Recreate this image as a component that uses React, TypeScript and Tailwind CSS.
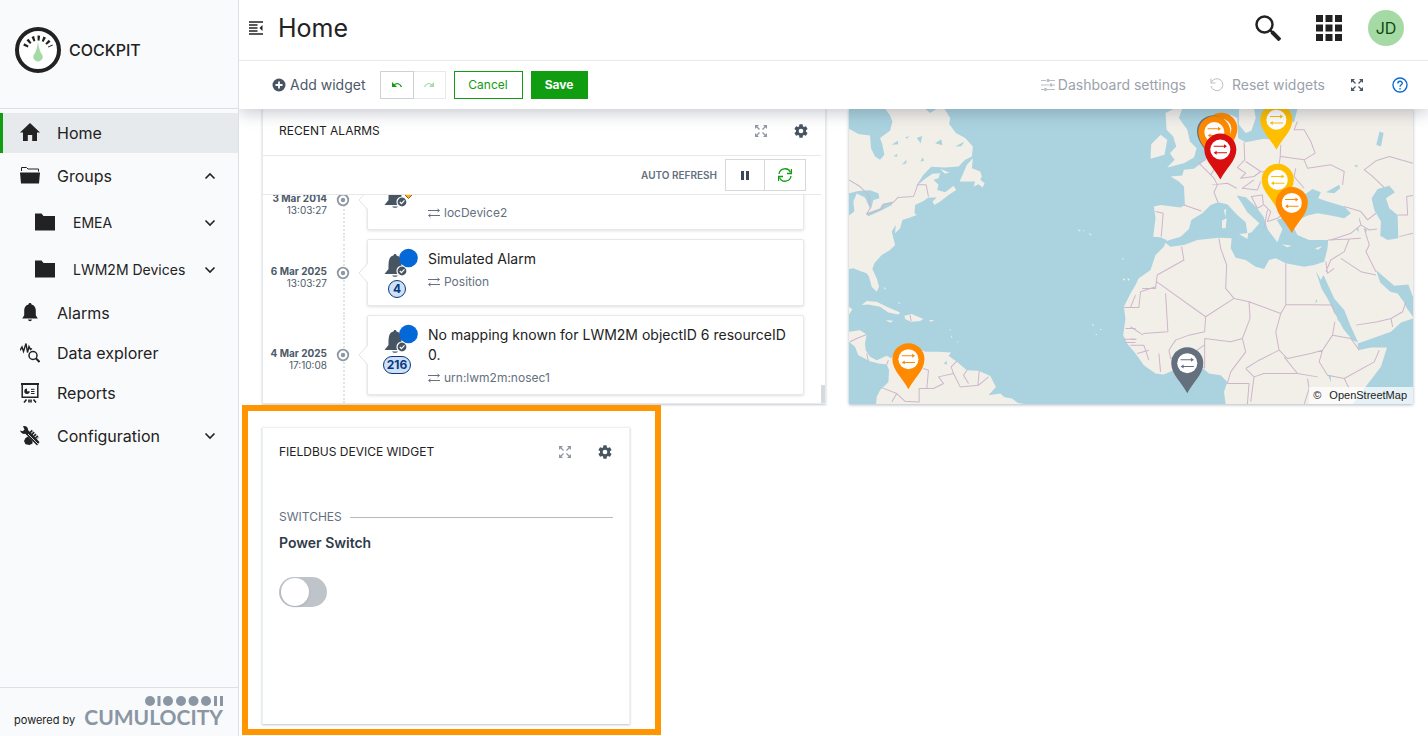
import React from 'react';
import { clsx } from 'clsx';

const Chevron = ({ up = false }: { up?: boolean }) => (
  <svg viewBox="0 0 12 12" className={clsx('w-3 h-3', up && 'rotate-180')} fill="none" stroke="#222" strokeWidth="1.6">
    <path d="M1.5 3.5 6 8l4.500-4.500" />
  </svg>
);

const HomeIcon = () => (
  <svg viewBox="0 0 20 20" className="w-5 h-5" fill="#222">
    <path d="M10 0 0 9.500h3V18h4.800v-6h4.400v6H17V9.500h3z" />
  </svg>
);

const OpenFolderIcon = () => (
  <svg viewBox="0 0 20 20" className="w-5 h-5">
    <path d="M1.500 5v-3.500h5L8 3h10.500v2.500" fill="none" stroke="#222" />
    <path d="M0 6.500h20l-1 11H1z" fill="#222" />
  </svg>
);

const FolderIcon = () => (
  <svg viewBox="0 0 20 20" className="w-5 h-5" fill="#222">
    <path d="M0 .5h6.500l2 2.500H20v14.500H0z" />
  </svg>
);

const BellIcon = () => (
  <svg viewBox="0 0 20 20" className="w-5 h-5" fill="#222">
    <path d="M10 0c1 0 1.500.6 1.500 1.500 3 .7 4.300 3.300 4.300 6v4.700l2 3.300H2.200l2-3.300V7.500c0-2.700 1.300-5.300 4.300-6C8.500.6 9 0 10 0zM8 16.500h4c-.3 1.200-1 1.700-2 1.700s-1.700-.5-2-1.700z" />
  </svg>
);

const ExplorerIcon = () => (
  <svg viewBox="0 0 20 20" className="w-5 h-5" fill="none" stroke="#222">
    <path d="M0 7.500 2 4l1.500 4.500L6 .5l1.500 9L9 3.500l1.500 3 1.500-1" strokeWidth="1.400" />
    <circle cx="13" cy="12.500" r="4" strokeWidth="1.500" />
    <path d="m16 15.500 3.500 3.500" strokeWidth="2" />
  </svg>
);

const ReportIcon = () => (
  <svg viewBox="0 0 20 20" className="w-5 h-5" fill="none" stroke="#222">
    <path d="M1 1h18" strokeWidth="2" />
    <path d="M2.200 2v12.200h15.600V2" strokeWidth="1.500" />
    <path d="M6.500 16.500 4 19.500M13.500 16.500l2.500 3M9 16.500v3M11 16.500v3" strokeWidth="1.600" />
    <path d="M11 6.300h3.500M11 8.500h3.500M11 10.500h3.500" />
    <path d="M7 5.500a2.700 2.700 0 1 0 2.700 2.700H7z" fill="#222" stroke="none" />
  </svg>
);

const ConfigIcon = () => (
  <svg viewBox="0 0 20 20" className="w-5 h-5">
    <path d="M3 .3c2.800-.8 5.300 1 5 3.800l11.500 12-2.500 3.500L5.300 7.800C3 8.300.8 7 0 4.500l2.800.8 1.700-1.700z" fill="#222" />
    <path d="m8 10.500 4.500 4.500v2.500L9.500 19l-4-.8L4 15l1.500-3z" fill="#222" />
    <path d="M10.500 5 18 12.500" stroke="#222" strokeWidth="3.500" strokeDasharray="1.700 .9" />
    <path d="m8 8 11 11" stroke="#f9fafc" strokeWidth=".8" />
  </svg>
);

const ExpandIcon = ({ className }: { className: string }) => (
  <svg viewBox="0 0 12 12" className={clsx('w-3 h-3', className)} fill="currentColor" stroke="currentColor">
    <path d="M0 0h4L0 4zM12 0v4L8 0zM0 12V8l4 4zM12 12H8l4-4z" stroke="none" />
    <path d="m1.500 1.500 3 3M10.500 1.500l-3 3M1.500 10.500l3-3M10.500 10.500l-3-3" strokeWidth="1.300" />
  </svg>
);

const GearIcon = () => (
  <svg viewBox="0 0 24 24" className="w-4 h-4" fill="#475563">
    <path d="M19.430 12.980c.04-.32.070-.64.070-.98s-.03-.66-.07-.98l2.110-1.650c.19-.15.240-.42.120-.64l-2-3.460c-.12-.22-.39-.3-.61-.22l-2.490 1c-.52-.4-1.080-.73-1.690-.98l-.38-2.650A.488.488 0 0 0 14 2h-4c-.25 0-.46.180-.49.420l-.38 2.650c-.61.250-1.170.59-1.690.98l-2.490-1c-.23-.09-.49 0-.61.220l-2 3.460c-.13.220-.07.490.120.640l2.110 1.650c-.04.320-.07.650-.07.980s.030.660.070.980l-2.110 1.650c-.19.150-.24.420-.12.640l2 3.460c.12.220.390.3.610.220l2.490-1c.52.400 1.080.730 1.690.980l.38 2.650c.03.240.240.420.490.420h4c.25 0 .46-.18.490-.42l.38-2.650c.61-.25 1.170-.59 1.690-.98l2.490 1c.23.090.490 0 .61-.22l2-3.460c.12-.22.070-.49-.12-.64l-2.110-1.650zM12 15.500A3.500 3.500 0 1 1 12 8.500a3.500 3.500 0 0 1 0 7z" />
  </svg>
);

const SwapIcon = () => (
  <svg viewBox="0 0 12 10" className="w-3 h-[10px]" fill="none" stroke="#64707e">
    <path d="M0 2.500h11M12 7.500H1M9.500 1 11.500 2.500 9.500 4M2.500 6 .5 7.500l2 1.500" />
  </svg>
);

const navItems = [
  { label: 'Home', icon: <HomeIcon />, active: true },
  { label: 'Groups', icon: <OpenFolderIcon />, toggle: 'up' },
  { label: 'EMEA', icon: <FolderIcon />, toggle: 'down', child: true },
  { label: 'LWM2M Devices', icon: <FolderIcon />, toggle: 'down', child: true },
  { label: 'Alarms', icon: <BellIcon /> },
  { label: 'Data explorer', icon: <ExplorerIcon /> },
  { label: 'Reports', icon: <ReportIcon /> },
  { label: 'Configuration', icon: <ConfigIcon />, toggle: 'down' },
];

const Sidebar = () => (
  <aside className="relative z-20 w-[239px] shrink-0 flex flex-col bg-[#f9fafc] border-r border-[#dcdfe3]">
    <div className="h-[109px] border-b border-[#dcdfe3] flex items-center gap-[7px] px-[14px] pb-2">
      <svg viewBox="0 0 48 48" className="w-12 h-12">
        <circle cx="24" cy="24" r="21" fill="#fff" stroke="#222" strokeWidth="4" />
        <path d="M11.500 20.500a13.500 13.500 0 0 1 25 0" fill="none" stroke="#222" strokeWidth="5" strokeDasharray="2.300 2.850" />
        <path d="M24 16c.8 6 2 9.500 3.700 12a4.600 4.600 0 1 1-7.400 0c1.700-2.500 2.900-6 3.700-12z" fill="#a5daa5" />
      </svg>
      <span className="text-base font-medium">COCKPIT</span>
    </div>
    <nav className="flex-1 pt-1">
      <ul>
        {navItems.map((item) => (
          <li key={item.label}>
            <a
              href="#"
              className={clsx(
                'flex items-center pr-[22px] border-l-[3px]',
                item.active ? 'bg-[#e6eaed] border-[#119d11]' : 'border-transparent',
                item.child ? 'h-[47px] pl-8 gap-[18px] text-sm' : 'pl-[17px] gap-[17px] text-base',
                !item.child && (item.toggle ? 'h-[46px]' : 'h-10'),
              )}
            >
              {item.icon}
              <span className="flex-1">{item.label}</span>
              {item.toggle && <Chevron up={item.toggle === 'up'} />}
            </a>
          </li>
        ))}
      </ul>
    </nav>
    <div className="h-[49px] border-t border-[#dcdfe3] flex items-end pl-[14px] pb-2 gap-[9px]">
      <span className="text-[11px] leading-4">powered by</span>
      <div className="flex flex-col items-end text-[#8a96a3]">
        <svg viewBox="0 0 78 10" className="w-[78px] h-[10px]" fill="currentColor">
          <circle cx="5" cy="5" r="5" />
          <path d="M12.500 0h3v10h-3zM69 0h3v10h-3zM75 0h3v10h-3z" />
          <circle cx="23" cy="5" r="5" />
          <circle cx="36" cy="5" r="5" />
          <circle cx="48.500" cy="5" r="5" />
          <circle cx="61" cy="5" r="5" />
        </svg>
        <span className="font-['Lato',sans-serif] font-bold text-[21px] leading-[22px]">CUMULOCITY</span>
      </div>
    </div>
  </aside>
);

const Header = () => (
  <header className="relative z-20 h-[61px] shrink-0 bg-white border-b border-[#e6eaed] flex items-center pl-[10px] pr-6 pb-1">
    <button aria-label="Toggle navigation">
      <svg viewBox="0 0 14 14" className="w-[14px] h-[14px]" fill="none" stroke="#222" strokeWidth="1.300">
        <path d="M0 1h14M0 4h8.500M0 7h8.500M0 10h8.500M0 13h14" />
        <path d="M13.500 4v6L10.500 7z" fill="#222" stroke="none" />
      </svg>
    </button>
    <h1 className="flex-1 ml-[15px] text-[25px] leading-8">Home</h1>
    <button aria-label="Search">
      <svg viewBox="0 0 26 26" className="w-[26px] h-[26px]" fill="none" stroke="#222">
        <circle cx="9.500" cy="9.500" r="8" strokeWidth="2.500" />
        <path d="m15.500 15.500 2 2" strokeWidth="2.500" />
        <path d="m17 17 8 8" strokeWidth="4" />
      </svg>
    </button>
    <button aria-label="Applications" className="ml-[35px]">
      <svg viewBox="0 0 26 26" className="w-[26px] h-[26px]" fill="#222">
        <path d="M0 0h7v7H0zM9.500 0h7v7h-7zM19 0h7v7h-7zM0 9.500h7v7H0zM9.500 9.500h7v7h-7zM19 9.500h7v7h-7zM0 19h7v7H0zM9.500 19h7v7h-7zM19 19h7v7h-7z" />
      </svg>
    </button>
    <button className="ml-[26px] w-9 h-9 rounded-full bg-[#a5daa5] text-[#0b4a0b] text-base">JD</button>
  </header>
);

const Toolbar = () => (
  <div className="relative z-10 h-12 shrink-0 bg-white shadow-[0_4px_16px_rgba(40,48,70,0.25)] flex items-center pl-[33px] pr-5 text-sm text-[#4b5968]">
    <button className="flex items-center gap-1">
      <svg viewBox="0 0 14 14" className="w-[14px] h-[14px]">
        <circle cx="7" cy="7" r="6.500" fill="#475563" />
        <path d="M7 3.500v7M3.500 7h7" stroke="#fff" strokeWidth="1.800" />
      </svg>
      Add widget
    </button>
    <div className="flex ml-[14px]">
      <button aria-label="Undo" className="w-[34px] h-7 border border-[#cdd2d8] flex items-center justify-center">
        <svg viewBox="0 0 10 6" className="w-[10px] h-[6px]" fill="none" stroke="#119d11" strokeWidth="1.300">
          <path d="M2 3c3-2.500 6-1.500 7.500 2" />
          <path d="M0 0v5h5z" fill="#119d11" stroke="none" />
        </svg>
      </button>
      <button aria-label="Redo" className="w-8 h-7 border border-l-0 border-[#e6e8eb] flex items-center justify-center">
        <svg viewBox="0 0 10 6" className="w-[10px] h-[6px]" fill="none" stroke="#a9dba9" strokeWidth="1.300">
          <path d="M8 3C5 .5 2 1.500.5 5" />
          <path d="M10 0v5H5z" fill="#a9dba9" stroke="none" />
        </svg>
      </button>
    </div>
    <button className="ml-2 w-[69px] h-7 border border-[#119d11] text-[#119d11] text-xs">Cancel</button>
    <button className="ml-2 w-[57px] h-7 bg-[#119d11] text-white text-xs font-bold">Save</button>
    <div className="flex-1" />
    <button className="flex items-center gap-[3px] text-[#9ba2ab]">
      <svg viewBox="0 0 14 14" className="w-[14px] h-[14px]" fill="none" stroke="#b9bec5">
        <path d="M0 2.500h5M8 2.500h6M0 7h8M11 7h3M0 11.500h3M6 11.500h8" />
        <path d="M7 1v3M10 5.500v3M4.500 10v3" strokeWidth="2.500" />
      </svg>
      Dashboard settings
    </button>
    <button className="flex items-center gap-2 ml-6 text-[#9ba2ab]">
      <svg viewBox="0 0 14 14" className="w-[14px] h-[14px]" fill="none" stroke="#b9bec5">
        <path d="M1.500 4a6 6 0 1 1-.5 4M1 .5V5h4.500" />
      </svg>
      Reset widgets
    </button>
    <button aria-label="Full screen" className="ml-[26px]">
      <ExpandIcon className="text-[#475563]" />
    </button>
    <button aria-label="Help" className="ml-[29px]">
      <svg viewBox="0 0 16 16" className="w-4 h-4" fill="none" stroke="#0a6ad6" strokeWidth="1.400">
        <circle cx="8" cy="8" r="7" />
        <path d="M5.800 6.500c0-3 4.500-3 4.500-.3 0 1.600-2.300 1.600-2.300 3.500M8 11v1.500" />
      </svg>
    </button>
  </div>
);

const WidgetHeader = ({ title, className }: { title: string; className: string }) => (
  <div className={clsx('flex items-center px-4', className)}>
    <h2 className="flex-1 text-xs">{title}</h2>
    <button aria-label="Expand widget" className="mr-[26px]">
      <ExpandIcon className="text-[#8e97a2]" />
    </button>
    <button aria-label="Widget settings">
      <GearIcon />
    </button>
  </div>
);

type Alarm = { date: string; time: string; title?: string; source: string; count?: number; severity: 'minor' | 'warning' };

const alarms: Alarm[] = [
  { date: '3 Mar 2014', time: '13:03:27', source: 'locDevice2', severity: 'minor' },
  { date: '6 Mar 2025', time: '13:03:27', title: 'Simulated Alarm', source: 'Position', count: 4, severity: 'warning' },
  {
    date: '4 Mar 2025',
    time: '17:10:08',
    title: 'No mapping known for LWM2M objectID 6 resourceID 0.',
    source: 'urn:lwm2m:nosec1',
    count: 216,
    severity: 'warning',
  },
];

const AlarmIcon = ({ severity }: { severity: Alarm['severity'] }) => (
  <svg viewBox="0 1 34 34" className="w-[34px] h-[34px]">
    <path d="M11 7c1 0 1.500.7 1.500 1.500 4 1 5 4 5 8v5.500l4 5H.5L4.500 22c0-7 0-12.500 5-13.500C9.500 7.700 10 7 11 7zM8 28.500h6c-.8 1.800-5.200 1.800-6 0z" fill="#475563" />
    <circle cx="18" cy="24" r="5" fill="#475563" stroke="#fff" strokeWidth="1.200" />
    <path d="m15.800 24 1.700 1.700 3-3.300" fill="none" stroke="#fff" strokeWidth="1.200" />
    {severity === 'warning' ? (
      <circle cx="24.500" cy="11" r="9.300" fill="#0568d8" />
    ) : (
      <path d="m24.500 4.500 8 8-8 8-8-8z" fill="#ffb300" stroke="#9a5b14" />
    )}
  </svg>
);

const AlarmRow = ({ alarm }: { alarm: Alarm }) => (
  <li className="relative flex items-center">
    <div className="absolute left-[80px] top-0 -bottom-2 border-l-2 border-dotted border-[#e0e4e7]" />
    <div className="w-16 shrink-0 pt-2 text-right text-[10px] leading-3 text-[#4b5968]">
      <div className="font-bold">{alarm.date}</div>
      <div>{alarm.time}</div>
    </div>
    <svg viewBox="0 0 14 14" className="relative w-[14px] h-[14px] ml-[9px] shrink-0">
      <circle cx="7" cy="7" r="5.300" fill="#fff" stroke="#8d98a4" strokeWidth="1.800" />
      <circle cx="7" cy="7" r="2.200" fill="#8d98a4" />
    </svg>
    <div className="relative flex-1 ml-[17px] flex items-start gap-[10px] rounded-[2px] border border-[#e6e8eb] bg-white shadow-[0_1px_3px_rgba(0,0,0,0.12)] pl-4 pr-2 pt-2 pb-[7px]">
      <svg viewBox="0 0 10 20" className="absolute -left-[10px] top-1/2 -mt-[10px] w-[10px] h-5">
        <path d="M10 0 1 10l9 10" fill="#fff" stroke="#e0e3e6" />
      </svg>
      <div className="flex flex-col items-center">
        <AlarmIcon severity={alarm.severity} />
        {alarm.count && (
          <span className="min-w-[18px] h-[18px] -mt-[2px] -ml-2 px-[3px] rounded-full border border-[#073a7e] bg-[#cfe1f8] text-[#073a7e] text-xs leading-4 font-bold text-center">
            {alarm.count}
          </span>
        )}
      </div>
      <div className="pt-px">
        <p className="min-h-5 text-sm leading-5">{alarm.title}</p>
        <p className="flex items-center gap-1 mt-1 text-xs leading-[18px] text-[#64707e]">
          <SwapIcon />
          {alarm.source}
        </p>
      </div>
    </div>
  </li>
);

const AlarmsWidget = () => (
  <section className="col-span-6 relative h-[295px] flex flex-col bg-white border-x border-b border-[#e6eaed] shadow-[0_1px_2px_rgba(60,80,100,0.3)]">
    <WidgetHeader title="RECENT ALARMS" className="h-[46px] shrink-0 pb-[2px]" />
    <div className="h-10 shrink-0 mr-1 border-y border-[#e6e8eb] flex items-center justify-end pr-[15px]">
      <span className="mr-2 text-[10px] font-semibold text-[#64707e]">AUTO REFRESH</span>
      <button aria-label="Pause" className="w-10 h-8 border border-[#d5d9dd] flex items-center justify-center">
        <svg viewBox="0 0 8 9" className="w-2 h-[9px]" fill="#3b4754">
          <path d="M0 0h3v9H0zM5 0h3v9H5z" />
        </svg>
      </button>
      <button aria-label="Refresh" className="w-[41px] h-8 border border-l-0 border-[#d5d9dd] flex items-center justify-center">
        <svg viewBox="0 0 14 14" className="w-[14px] h-[14px]" fill="none" stroke="#119d11" strokeWidth="1.300">
          <path d="M1 6a6 6 0 0 1 11.500-1.500M13 8A6 6 0 0 1 1.500 9.500" />
          <path d="M13.500 1v4.500H9M.5 13V8.500H5" />
        </svg>
      </button>
    </div>
    <ul className="flex-1 min-h-0 overflow-hidden flex flex-col justify-end gap-[9px] pb-2 pr-[21px]">
      {alarms.map((alarm) => (
        <AlarmRow key={alarm.date} alarm={alarm} />
      ))}
    </ul>
    <div className="absolute right-0 bottom-0 w-1 h-[18px] bg-[#d5dadd]" />
  </section>
);

const pins = [
  { x: 190, y: 762, color: '#ff8a00' },
  { x: 1292, y: 45, color: '#ffbe00' },
  { x: 1127, y: 72, color: '#ff8a00' },
  { x: 1102, y: 80, color: '#64707e' },
  { x: 1106, y: 82, color: '#ff8a00' },
  { x: 1124, y: 134, color: '#d90f0f' },
  { x: 1296, y: 225, color: '#ffbe00' },
  { x: 1338, y: 294, color: '#ff8a00' },
  { x: 1025, y: 774, color: '#64707e' },
];

const Pin = ({ x, y, color }: { x: number; y: number; color: string }) => (
  <g transform={`translate(${x} ${y})`}>
    <path d="M0 90C-16 58-48 34-48 0a48 48 0 0 1 96 0C48 34 16 58 0 90z" fill={color} />
    <circle r="30" fill="#fff" />
    <path d="M-20-10h36M20 10h-36" stroke={color} strokeWidth="3" />
    <path d="M11-16l9 6-9 6zM-11 4l-9 6 9 6z" fill={color} />
  </g>
);

const MapWidget = () => (
  <section className="col-span-6 relative h-[295px] overflow-hidden bg-[#aad3df] shadow-[0_1px_3px_rgba(60,80,100,0.4)]">
    <svg viewBox="12 12 1689 885" preserveAspectRatio="xMidYMid slice" className="w-full h-full" strokeLinejoin="round">
      <g fill="#f2efe9">
        <path d="M12 72 40 88 75 92 78 130 90 155 105 165 118 150 112 120 105 100 135 78 142 50 134 30 120 12H240L255 25 275 12H298L315 40 312 58 332 85 360 100 383 125 380 155 360 165 340 185 300 188 258 186 235 210 212 245 240 222 262 207 285 205 280 220 265 225 280 240 276 255 300 262 325 243 333 255 310 270 285 290 268 300 262 290 275 278 250 278 235 288 210 300 208 325 215 330 195 338 172 345 165 370 150 385 152 360 140 380 150 420 135 435 110 450 88 475 82 492 95 520 102 545 95 560 80 545 72 515 65 505 45 498 25 490 12 492z" />
        <path d="M383 160 380 190 405 200 410 215 405 225 418 235 412 248 400 238 385 245 390 230 343 230 350 215 365 180zM285 192l28 12-15 2z" />
        <path d="M50 600 65 588 95 590 125 605 165 622 160 628 130 622 105 605 70 598zM178 632 200 627 235 642 225 648 198 650 180 642zM122 645l22 2-8 6zM250 644l18 2-10 4zM12 605l10 8-10 15z" />
        <path d="M12 680 45 675 65 688 60 715 62 735 75 755 95 765 125 752 140 760 148 742 165 728 215 728 240 740 280 740 318 742 310 752 335 770 365 795 400 797 435 812 452 845 430 870 465 865 478 876 500 880 518 893 545 897H93L95 875 105 855 130 830 132 795 125 778 100 775 75 768 40 750 30 725 12 710z" />
        <path d="M698 374l8 2-5 4zM712 376l5 1-4 3zM730 385l9 3-5 3zM740 657l5 2-3 5zM750 686l6 1-4 3zM765 670l4 3-4 3zM832 520l8 3-6 4zM845 520l8 2-4 6zM830 460l6 2-4 3zM118 545l5 8-6-2zM160 590l6 5-5 1zM315 670l3 6-4-1zM318 690l4 8-4 0zM335 708l5 3-5 1z" />
      </g>
      <path d="M12 265 40 258 75 256 100 265 103 280 85 285 78 312 70 300 60 278 35 266 25 290 28 320 12 332zM63 326 105 310 112 298 145 290 140 300 110 316 70 334zM140 120l18-12 2 10zM215 100l16-6-4 22zM270 115l18-12 4 18zM170 180l14-15 0 10zM330 125l28-15-10 14zM295 775l10-8 0 12zM100 75l12-10 4 6zM180 98l12-4-6 8zM225 170l8-12 4 10zM145 155l10-8 2 8z" fill="#aad3df" />
      <g transform="translate(855 0)">
        <path d="M285 897 280 860 290 830 270 810 235 805 218 790 175 795 140 790 100 808 75 805 40 780 15 745-10 715-22 690-15 640-20 605 0 565 15 540 25 520 60 495 75 450 100 425 108 405 90 397 68 395 75 340 70 305 90 300 150 308 163 300 160 245 145 230 120 215 155 212 160 195 190 192 225 165 240 140 280 120 300 105 285 60 300 30 320 40 322 100 345 112 400 102 445 108 450 80 450 50 490 52 500 12H846V640L810 652 780 680 700 708 680 715 682 735 720 727 768 727 750 785 700 850 665 897z" fill="#f2efe9" />
        <path d="M105 25 130 12H155L145 40 170 75 178 110 198 130 190 158 160 175 110 188 132 165 118 145 137 125 128 95 108 75zM62 118 90 90 110 105 102 150 60 162zM325 12 325 60 345 85 362 78 375 40 370 12z" fill="#f2efe9" />
        <path d="M100 410 150 395 175 372 182 345 215 325 240 300 262 292 290 298 320 330 345 352 350 385 362 383 386 355 350 322 330 290 318 272 345 277 375 305 398 335 412 375 440 412 455 372 438 345 468 335 490 342 490 370 500 390 535 405 592 405 590 430 580 470 550 480 520 485 465 475 435 460 415 465 400 492 375 485 345 465 315 458 300 430 303 400 265 398 200 405 160 420 120 425z" fill="#aad3df" />
        <path d="M500 330 520 270 545 252 570 262 562 280 590 290 640 305 660 325 640 340 600 332 560 325 530 332 502 345zM585 262 625 240 628 250 610 265zM722 280 740 252 775 243 792 262 765 280 775 310 800 330 802 400 770 405 748 392 750 350 730 315z" fill="#aad3df" />
        <path d="M555 498 570 525 578 510 610 580 640 615 660 665 682 712 665 705 638 672 612 625 590 580 572 550zM735 495 755 512 790 542 832 538 846 575V635L828 610 818 590 800 565 778 560 748 532z" fill="#aad3df" />
        <path d="M325 387 353 384 350 402zM274 347 288 340 285 370 274 370zM280 315 287 312 284 336zM452 418 482 422 470 427zM552 430 574 424 562 434z" fill="#f2efe9" />
        <path d="M736 120l10-40 12 5-8 40zM670 180l12 2-6 6zM540 600l14-8 2-10 4 8zM618 640l10 0-3 10zM592 810l8 0 0 22zM675 370l8 0 0 12zM700 370l8 4-2 10z" fill="#aad3df" />
        <g fill="none" stroke="#cdb6cb" strokeWidth="3">
          <path d="M160 300 212 318M75 320 98 325 92 395M225 165 205 175 250 220 260 240 250 262 262 292M245 240 290 235 318 250M235 155 250 195 240 210M340 112 342 165 320 188 345 205 330 220 370 215 390 200 345 170M370 225 335 250 380 255 390 230M362 275 395 270 398 300 380 310zM390 200 440 205 448 160 450 120M450 155 520 165 553 145 540 110 520 75 490 75 500 50M520 165 530 190 600 180 640 200 635 240M495 190 490 215 520 250M400 300 420 320 410 350 440 340 470 320M410 315 400 370M640 305 690 320 710 345 735 325M685 340 690 360 715 375 738 372M690 360 660 385 600 405M720 210 700 195 735 168 775 155 846 175M720 210 760 248M800 330 830 330 827 275 846 272M805 395 846 385M700 370 715 420 705 440 735 500" />
          <path d="M592 405 655 402 640 440 600 465 585 500M655 402 690 400M630 460 690 500 735 510M585 470 590 505 610 490M153 425 160 465 80 510 75 550 35 550M265 400 270 430 288 480 285 550 310 580 225 635 78 530M0 607 25 607 30 560 75 545M105 565 112 680 38 685M0 665 38 690M310 580 355 590 450 625 465 600 465 475M465 598 603 600 612 625M225 635 222 680 175 690 135 705 115 735M450 625 435 680 445 735 385 765 345 790M355 590 358 640 335 700 345 740M222 700 300 710 335 700M222 700 222 790M115 735 120 760 200 735 220 720M135 740 130 795M85 745 90 800M345 740 300 800 290 835M445 735 470 760 540 745 575 735 605 690 612 650M575 735 565 770 590 810 640 820 730 770 745 735M605 690 660 700 685 735M460 755 500 805 560 815M345 790 370 815 400 805 500 805M370 815 360 890M290 835 355 835 350 897M530 820 535 850 520 897M675 660 740 650 780 640 785 665M780 640 815 620 825 590M640 820 655 850" />
          <path d="M0 720 40 720 55 765M0 702h18M20 745 55 735M222 785 200 790" />
        </g>
      </g>
      <g fill="none" stroke="#cdb6cb" strokeWidth="3">
        <path d="M12 225 45 245 72 272 75 310 65 328 110 312 115 298 145 292 158 278 205 275 218 240 243 240 250 275M15 710 35 700 65 688M65 745 70 768M195 630 198 648M130 765 125 778M112 848 155 865 180 888 222 890 222 850 250 850 265 850 295 835 280 815 325 805 318 785 335 768M235 790 250 795 245 850M325 805 345 845 400 840 430 815M365 795 355 810 370 835M402 797 398 840M155 865 140 890M855 607h-20M855 607 870 570M840 670h30M835 702h35M838 712h32" />
      </g>
      {pins.map((pin) => (
        <Pin key={`${pin.x}-${pin.y}`} {...pin} />
      ))}
    </svg>
    <div className="absolute right-0 bottom-0 flex gap-2 pl-1 pr-[6px] bg-white/70 font-['Liberation_Sans',sans-serif] text-[11px] leading-[17px] text-[#222]">
      <span>©</span>
      <a href="#">OpenStreetMap</a>
    </div>
  </section>
);

const FieldbusWidget = () => (
  <div className="col-span-4 relative">
    <div className="absolute -left-5 -right-[31px] -top-[22px] -bottom-[11px] border-[6px] border-[#ff9500]" />
    <section className="relative h-[297px] bg-white border-x border-t border-[#eef1f3] shadow-[0_1px_2px_rgba(60,80,100,0.35)]">
      <WidgetHeader title="FIELDBUS DEVICE WIDGET" className="h-[47px]" />
      <div className="px-4 pt-[34px]">
        <h3 className="flex items-center gap-2 text-xs leading-4 text-[#64707e]">
          SWITCHES
          <span className="flex-1 border-t border-[#b3bac2]" />
        </h3>
        <label htmlFor="power" className="block mt-2 text-sm leading-5 font-semibold text-[#2f3b48]">
          Power Switch
        </label>
        <div className="relative mt-6 w-12 h-[30px]">
          <input id="power" type="checkbox" role="switch" className="peer appearance-none block w-12 h-[30px] rounded-full bg-[#bfc4cb] checked:bg-[#119d11]" />
          <span className="pointer-events-none absolute left-[2px] top-[1px] w-7 h-7 rounded-full bg-white shadow peer-checked:left-[18px]" />
        </div>
      </div>
    </section>
  </div>
);

const App = () => (
  <div className="h-screen flex overflow-hidden bg-white text-[#222] font-['Inter',sans-serif]">
    <Sidebar />
    <div className="flex-1 min-w-0 flex flex-col">
      <Header />
      <Toolbar />
      <main className="flex-1 min-h-0 overflow-hidden pl-[23px] pr-[15px]">
        <div className="grid grid-cols-12 gap-x-[23px] gap-y-[23px]">
          <AlarmsWidget />
          <MapWidget />
          <FieldbusWidget />
        </div>
      </main>
    </div>
  </div>
);

export default App;
